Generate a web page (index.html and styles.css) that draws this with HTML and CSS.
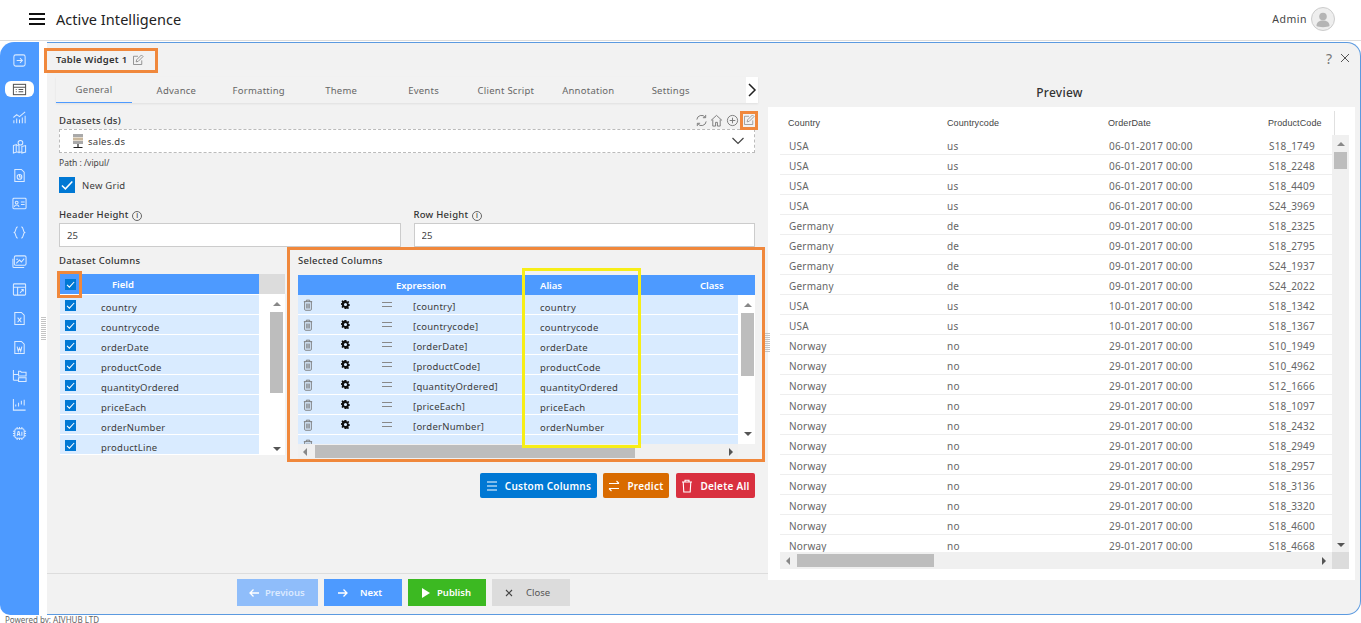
FILE: index.html
```html
<!DOCTYPE html>
<html lang="en">
<head>
    <meta charset="UTF-8">
    <meta name="viewport" content="width=device-width, initial-scale=1.0">
    <title>Active Intelligence</title>
    <link rel="stylesheet" href="styles.css">
</head>
<body>

    <svg class="icon-defs" width="0" height="0">
        <symbol id="i-edit" viewBox="0 0 16 16"><path d="M13 8.5V14H2V3h6" fill="none" stroke="currentColor"/><path d="M5.5 10.5l.7-2.8L12.6 1.3l2.1 2.1-6.4 6.4z" fill="none" stroke="currentColor"/></symbol>
        <symbol id="i-trash" viewBox="0 0 12 14"><path d="M1 3h10M4 3V1.2h4V3M2 3v9.3c0 .6.4 1 1 1h6c.6 0 1-.4 1-1V3M4.5 5.2v6M6 5.2v6M7.5 5.2v6" fill="none" stroke="currentColor" stroke-width="1.1"/></symbol>
        <symbol id="i-gear" viewBox="0 0 12 12"><path fill-rule="evenodd" d="M4.8 0h2.4l.3 1.6 1.1.5L10 1.2l1 1.6-1.1 1.2.2 1.2 1.6.6v1.9l-1.6.6-.4 1.1 1 1.4-1.3 1.3-1.5-.9-1.1.5L7.2 12H4.8l-.4-1.7-1.1-.5-1.4.9L.6 9.400l.9-1.400-.4-1.200L-.300 6.300V4.600l1.500-.6.300-1.200-1-1.300L1.900.200l1.400 1 1.100-.5zM6 3.900a2.100 2.100 0 1 0 0 4.200 2.100 2.100 0 0 0 0-4.200z" fill="currentColor"/></symbol>
        <symbol id="i-check" viewBox="0 0 12 12"><path d="M2.200 6.400l2.600 2.500 5.200-5.600" fill="none" stroke="#fff" stroke-width="1.100"/></symbol>
    </svg>

    <header class="topbar">
        <div class="brand">
            <span class="burger"><i></i><i></i><i></i></span>
            <span class="brand-name">Active Intelligence</span>
        </div>
        <div class="user">
            <span>Admin</span>
            <span class="avatar">
                <svg width="20" height="20" viewBox="0 0 20 20"><circle cx="10" cy="7.500" r="3.800" fill="#b5b5b5"/><path d="M3.500 17c0-4 3-5.500 6.500-5.500s6.500 1.500 6.500 5.500c-2 1.500-11 1.500-13 0z" fill="#b5b5b5"/></svg>
            </span>
        </div>
    </header>

    <div class="app">
        <!-- Left icon rail -->
        <nav class="rail">
            <a class="rail-item"><svg viewBox="0 0 16 16"><rect x="2" y="2" width="12" height="12" rx="2"/><path d="M5 8h6M8.500 5.500L11 8l-2.500 2.500"/></svg></a>
            <a class="rail-item active"><svg viewBox="0 0 16 16"><rect x="1.500" y="2.500" width="13" height="11"/><path d="M1.500 5.500h13M4 8h1M7 8h5M4 10.500h1M7 10.500h5"/></svg></a>
            <a class="rail-item"><svg viewBox="0 0 16 16"><path d="M2 14v-3M5 14V9M8 14v-4M11 14V8M14 14V6M1.500 8L5 5l3 2 6-5"/></svg></a>
            <a class="rail-item"><svg viewBox="0 0 16 16"><path d="M1.500 7l3-1v8l-3 1zM4.500 6l3 1.500v7l-3-1zM7.500 8.500v6l3-1M10.500 8l4-1v7l-4 1z"/><circle cx="9" cy="4" r="2.500"/></svg></a>
            <a class="rail-item"><svg viewBox="0 0 16 16"><path d="M3 1.500h7l3 3v10H3z"/><circle cx="8" cy="9.500" r="2.500"/><path d="M8 7v2.500h2.500"/></svg></a>
            <a class="rail-item"><svg viewBox="0 0 16 16"><rect x="1" y="2.500" width="14" height="11" rx="1"/><circle cx="5" cy="7" r="1.500"/><path d="M2.500 11.500c.5-2.500 4.500-2.500 5 0M9.500 6.500h4M9.500 9h4"/></svg></a>
            <a class="rail-item"><svg viewBox="0 0 16 16"><path d="M6 2C3.500 2 4.500 7 2.500 8 4.500 9 3.500 14 6 14M10 2c2.500 0 1.500 5 3.500 6-2 1-1 6-3.500 6"/></svg></a>
            <a class="rail-item"><svg viewBox="0 0 16 16"><rect x="2.500" y="2" width="12.500" height="10" rx="1.500"/><path d="M1 5v8.500c0 .5.500 1 1 1h11M4.500 10L8 6.500l2 2 3-3.500M4.500 5.500h2"/></svg></a>
            <a class="rail-item"><svg viewBox="0 0 16 16"><rect x="1.500" y="2" width="13" height="12" rx="1"/><path d="M1.500 5.500h13M6 5.500V14M8.500 11.500L12 8M10 8h2v2"/></svg></a>
            <a class="rail-item"><svg viewBox="0 0 16 16"><path d="M3 1.500h7l3 3v10H3zM6 7l4 5M10 7l-4 5"/></svg></a>
            <a class="rail-item"><svg viewBox="0 0 16 16"><path d="M3 1.500h7l3 3v10H3zM5.500 7l1.200 5L8 8.500 9.300 12l1.200-5"/></svg></a>
            <a class="rail-item"><svg viewBox="0 0 16 16"><path d="M1.500 2v11M1.500 7h5M1.500 13h5M7 3.500h2l1 1h5v4H7zM7 10.500h8v4H7z"/></svg></a>
            <a class="rail-item"><svg viewBox="0 0 16 16"><path d="M1.500 2v12h13M4 10V8M7 10V6M10 8V4M13 9V3"/></svg></a>
            <a class="rail-item"><svg viewBox="0 0 16 16"><rect x="3" y="3" width="10" height="10" rx="2"/><path d="M5.500 1v2M8 1v2M10.500 1v2M5.500 13v2M8 13v2M10.500 13v2M1 5.500h2M1 8h2M1 10.500h2M13 5.500h2M13 8h2M13 10.500h2M5.500 10.500L6.500 6h1l1 4.500M6 9h2M10.500 6v4.500"/></svg></a>
        </nav>

        <main class="panel">
            <!-- Widget settings -->
            <section class="editor">
                <div class="widget-title annotated">
                    <span>Table Widget 1</span>
                    <svg class="ico-15"><use href="#i-edit"/></svg>
                </div>

                <div class="tabbar">
                    <div class="tabs">
                        <a class="tab active">General</a>
                        <a class="tab">Advance</a>
                        <a class="tab">Formatting</a>
                        <a class="tab">Theme</a>
                        <a class="tab">Events</a>
                        <a class="tab">Client Script</a>
                        <a class="tab">Annotation</a>
                        <a class="tab">Settings</a>
                    </div>
                    <button class="tab-next"><svg width="12" height="16" viewBox="0 0 12 16"><path d="M3 2l6 6-6 6" fill="none" stroke="#222" stroke-width="1.500"/></svg></button>
                </div>

                <div class="form">
                    <div class="ds-head">
                        <label class="lbl">Datasets (ds)</label>
                        <div class="ds-tools">
                            <svg width="13" height="13" viewBox="0 0 14 14"><path d="M2 6a5 5 0 0 1 9-2.500M12 8a5 5 0 0 1-9 2.500M11.500 1v3h-3M2.500 13v-3h3" fill="none" stroke="#777" stroke-width="1"/></svg>
                            <svg width="13" height="13" viewBox="0 0 14 14"><path d="M1 7l6-5.500L13 7M3 6v7h3V9h2v4h3V6" fill="none" stroke="#777" stroke-width="1"/></svg>
                            <svg width="13" height="13" viewBox="0 0 14 14"><circle cx="7" cy="7" r="5.500" fill="none" stroke="#777"/><path d="M4 7h6M7 4v6" stroke="#777"/></svg>
                            <span class="tool-box"><svg class="ico-13"><use href="#i-edit"/></svg></span>
                        </div>
                    </div>
                    <div class="ds-select">
                        <svg width="12" height="16" viewBox="0 0 12 16"><rect x="1" y="1" width="10" height="3" fill="#a9a9a9"/><rect x="1" y="4.500" width="10" height="3" fill="#c9b79c"/><rect x="1" y="8" width="10" height="3" fill="#a9a9a9"/><path d="M6 11v3M1.500 14.500h9" stroke="#222" stroke-width="1.200"/></svg>
                        <span>sales.ds</span>
                        <svg class="chev" width="14" height="8" viewBox="0 0 14 8"><path d="M1.500 1l5.500 5.500L12.500 1" fill="none" stroke="#444" stroke-width="1.200"/></svg>
                    </div>
                    <div class="path">Path : /vipul/</div>
                    <div class="new-grid">
                        <span class="check big"><svg><use href="#i-check"/></svg></span>
                        <span>New Grid</span>
                    </div>

                    <div class="heights">
                        <div class="field">
                            <label class="lbl">Header Height <i class="info">i</i></label>
                            <input class="input-field" type="text" value="25">
                        </div>
                        <div class="field">
                            <label class="lbl">Row Height <i class="info">i</i></label>
                            <input class="input-field" type="text" value="25">
                        </div>
                    </div>

                    <div class="columns">
                        <!-- Dataset Columns -->
                        <div class="ds-cols">
                            <div class="lbl cols-title">Dataset Columns</div>
                            <div class="ds-table">
                                <div class="ds-header">
                                    <div class="ds-header-cell">
                                        <span class="head-check"><span class="check"><svg><use href="#i-check"/></svg></span></span>
                                        <span class="field-name">Field</span>
                                    </div>
                                </div>
                                <div class="ds-body">
                                    <div class="ds-rows">
                                        <div class="ds-row"><span class="check"><svg><use href="#i-check"/></svg></span><span class="ds-name">country</span></div>
                                        <div class="ds-row"><span class="check"><svg><use href="#i-check"/></svg></span><span class="ds-name">countrycode</span></div>
                                        <div class="ds-row"><span class="check"><svg><use href="#i-check"/></svg></span><span class="ds-name">orderDate</span></div>
                                        <div class="ds-row"><span class="check"><svg><use href="#i-check"/></svg></span><span class="ds-name">productCode</span></div>
                                        <div class="ds-row"><span class="check"><svg><use href="#i-check"/></svg></span><span class="ds-name">quantityOrdered</span></div>
                                        <div class="ds-row"><span class="check"><svg><use href="#i-check"/></svg></span><span class="ds-name">priceEach</span></div>
                                        <div class="ds-row"><span class="check"><svg><use href="#i-check"/></svg></span><span class="ds-name">orderNumber</span></div>
                                        <div class="ds-row"><span class="check"><svg><use href="#i-check"/></svg></span><span class="ds-name">productLine</span></div>
                                    </div>
                                    <div class="vscroll ds-scroll">
                                        <i class="arrow up"></i>
                                        <i class="thumb"></i>
                                        <i class="arrow down"></i>
                                    </div>
                                </div>
                            </div>
                        </div>

                        <!-- Selected Columns -->
                        <div class="sel-cols">
                            <div class="lbl cols-title">Selected Columns</div>
                            <div class="sel-table">
                                <div class="sel-header">
                                    <span class="h-expr">Expression</span>
                                    <span class="h-alias">Alias</span>
                                    <span class="h-class">Class</span>
                                </div>
                                <div class="sel-body">
                                    <div class="sel-rows">
                                        <div class="sel-row"><svg class="r-trash"><use href="#i-trash"/></svg><svg class="r-gear"><use href="#i-gear"/></svg><span class="r-eq"></span><span class="r-expr">[country]</span><span class="r-alias">country</span></div>
                                        <div class="sel-row"><svg class="r-trash"><use href="#i-trash"/></svg><svg class="r-gear"><use href="#i-gear"/></svg><span class="r-eq"></span><span class="r-expr">[countrycode]</span><span class="r-alias">countrycode</span></div>
                                        <div class="sel-row"><svg class="r-trash"><use href="#i-trash"/></svg><svg class="r-gear"><use href="#i-gear"/></svg><span class="r-eq"></span><span class="r-expr">[orderDate]</span><span class="r-alias">orderDate</span></div>
                                        <div class="sel-row"><svg class="r-trash"><use href="#i-trash"/></svg><svg class="r-gear"><use href="#i-gear"/></svg><span class="r-eq"></span><span class="r-expr">[productCode]</span><span class="r-alias">productCode</span></div>
                                        <div class="sel-row"><svg class="r-trash"><use href="#i-trash"/></svg><svg class="r-gear"><use href="#i-gear"/></svg><span class="r-eq"></span><span class="r-expr">[quantityOrdered]</span><span class="r-alias">quantityOrdered</span></div>
                                        <div class="sel-row"><svg class="r-trash"><use href="#i-trash"/></svg><svg class="r-gear"><use href="#i-gear"/></svg><span class="r-eq"></span><span class="r-expr">[priceEach]</span><span class="r-alias">priceEach</span></div>
                                        <div class="sel-row"><svg class="r-trash"><use href="#i-trash"/></svg><svg class="r-gear"><use href="#i-gear"/></svg><span class="r-eq"></span><span class="r-expr">[orderNumber]</span><span class="r-alias">orderNumber</span></div>
                                        <div class="sel-row"><svg class="r-trash"><use href="#i-trash"/></svg></div>
                                    </div>
                                    <div class="vscroll sel-scroll">
                                        <i class="arrow up"></i>
                                        <i class="thumb"></i>
                                        <i class="arrow down"></i>
                                    </div>
                                </div>
                                <div class="sel-hbar">
                                    <div class="hscroll">
                                        <i class="arrow left"></i>
                                        <i class="thumb"></i>
                                        <i class="arrow right"></i>
                                    </div>
                                </div>
                            </div>
                            <div class="alias-mark"></div>
                        </div>
                    </div>

                    <div class="col-actions">
                        <button class="btn btn-blue">
                            <svg width="12" height="12" viewBox="0 0 12 12"><path d="M1 2h10M1 6h10M1 10h10" stroke="#fff" stroke-width="1.200"/></svg>
                            Custom Columns
                        </button>
                        <button class="btn btn-orange">
                            <svg width="12" height="12" viewBox="0 0 12 12"><path d="M1 3.500h10M8.500 1L11 3.500M11 8.500H1M3.500 11L1 8.500" fill="none" stroke="#fff" stroke-width="1.100"/></svg>
                            Predict
                        </button>
                        <button class="btn btn-red">
                            <svg width="12" height="14" viewBox="0 0 12 14"><path d="M1 3h10M4 3V1.200h4V3M2.200 3l.6 10h6.400l.6-10" fill="none" stroke="#fff" stroke-width="1.100"/></svg>
                            Delete All
                        </button>
                    </div>
                </div>

                <footer class="wizard">
                    <button class="step step-prev">
                        <svg width="12" height="10" viewBox="0 0 12 10"><path d="M11 5H2M5.500 1.500L2 5l3.500 3.500" fill="none" stroke="#fff" stroke-width="1.300"/></svg>
                        Previous
                    </button>
                    <button class="step step-next">
                        <svg width="12" height="10" viewBox="0 0 12 10"><path d="M1 5h9M6.500 1.500L10 5 6.500 8.500" fill="none" stroke="#fff" stroke-width="1.300"/></svg>
                        <span>Next</span>
                    </button>
                    <button class="step step-publish">
                        <svg width="10" height="12" viewBox="0 0 10 12"><path d="M1 1l8 5-8 5z" fill="#fff"/></svg>
                        Publish
                    </button>
                    <button class="step step-close">
                        <svg width="10" height="10" viewBox="0 0 10 10"><path d="M2 2l6 6M8 2l-6 6" stroke="#444" stroke-width="1.100"/></svg>
                        <span>Close</span>
                    </button>
                </footer>
            </section>

            <!-- Preview -->
            <section class="preview">
                <div class="win-tools">
                    <span class="help">?</span>
                    <svg width="10" height="10" viewBox="0 0 10 10"><path d="M1 1l8 8M9 1l-8 8" stroke="#555" stroke-width="1"/></svg>
                </div>
                <h3 class="preview-title">Preview</h3>
                <div class="preview-card">
                    <div class="pv-head">
                        <div class="pv-row pv-names">
                            <span>Country</span><span>Countrycode</span><span>OrderDate</span><span>ProductCode</span>
                        </div>
                    </div>
                    <div class="pv-main">
                        <div class="pv-rows">
                            <div class="pv-row"><span>USA</span><span>us</span><span>06-01-2017 00:00</span><span>S18_1749</span></div>
                            <div class="pv-row"><span>USA</span><span>us</span><span>06-01-2017 00:00</span><span>S18_2248</span></div>
                            <div class="pv-row"><span>USA</span><span>us</span><span>06-01-2017 00:00</span><span>S18_4409</span></div>
                            <div class="pv-row"><span>USA</span><span>us</span><span>06-01-2017 00:00</span><span>S24_3969</span></div>
                            <div class="pv-row"><span>Germany</span><span>de</span><span>09-01-2017 00:00</span><span>S18_2325</span></div>
                            <div class="pv-row"><span>Germany</span><span>de</span><span>09-01-2017 00:00</span><span>S18_2795</span></div>
                            <div class="pv-row"><span>Germany</span><span>de</span><span>09-01-2017 00:00</span><span>S24_1937</span></div>
                            <div class="pv-row"><span>Germany</span><span>de</span><span>09-01-2017 00:00</span><span>S24_2022</span></div>
                            <div class="pv-row"><span>USA</span><span>us</span><span>10-01-2017 00:00</span><span>S18_1342</span></div>
                            <div class="pv-row"><span>USA</span><span>us</span><span>10-01-2017 00:00</span><span>S18_1367</span></div>
                            <div class="pv-row"><span>Norway</span><span>no</span><span>29-01-2017 00:00</span><span>S10_1949</span></div>
                            <div class="pv-row"><span>Norway</span><span>no</span><span>29-01-2017 00:00</span><span>S10_4962</span></div>
                            <div class="pv-row"><span>Norway</span><span>no</span><span>29-01-2017 00:00</span><span>S12_1666</span></div>
                            <div class="pv-row"><span>Norway</span><span>no</span><span>29-01-2017 00:00</span><span>S18_1097</span></div>
                            <div class="pv-row"><span>Norway</span><span>no</span><span>29-01-2017 00:00</span><span>S18_2432</span></div>
                            <div class="pv-row"><span>Norway</span><span>no</span><span>29-01-2017 00:00</span><span>S18_2949</span></div>
                            <div class="pv-row"><span>Norway</span><span>no</span><span>29-01-2017 00:00</span><span>S18_2957</span></div>
                            <div class="pv-row"><span>Norway</span><span>no</span><span>29-01-2017 00:00</span><span>S18_3136</span></div>
                            <div class="pv-row"><span>Norway</span><span>no</span><span>29-01-2017 00:00</span><span>S18_3320</span></div>
                            <div class="pv-row"><span>Norway</span><span>no</span><span>29-01-2017 00:00</span><span>S18_4600</span></div>
                            <div class="pv-row"><span>Norway</span><span>no</span><span>29-01-2017 00:00</span><span>S18_4668</span></div>
                        </div>
                        <div class="vscroll pv-scroll">
                            <i class="arrow up"></i>
                            <i class="thumb"></i>
                            <i class="arrow down"></i>
                        </div>
                    </div>
                    <div class="pv-foot">
                        <div class="hscroll">
                            <i class="arrow left"></i>
                            <i class="thumb"></i>
                            <i class="arrow right"></i>
                        </div>
                        <div class="corner"></div>
                    </div>
                </div>
            </section>
            <span class="grip grip-left"></span>
            <span class="grip grip-mid"></span>
        </main>
    </div>

    <div class="powered">Powered by: AIVHUB LTD</div>

</body>
</html>
```

FILE: styles.css
```css
/* Basic Styles */
* {
    box-sizing: border-box;
}

html, body {
    margin: 0;
    height: 623px;
    overflow: hidden;
}

body {
    font-family: 'Noto Sans', 'Open Sans', sans-serif;
    font-size: 9.5px;
    color: #3c3c3c;
    background-color: #fff;
    letter-spacing: .25px;
}

.icon-defs {
    position: absolute;
}

button {
    font-family: inherit;
    border: none;
    cursor: pointer;
}

/* Top bar */
.topbar {
    height: 41px;
    display: flex;
    align-items: center;
    justify-content: space-between;
    padding: 0 26px 3px 29px;
    border-bottom: 1px solid #dcdcdc;
}

.brand {
    display: flex;
    align-items: center;
    gap: 11px;
}

.burger {
    width: 16px;
    display: flex;
    flex-direction: column;
    gap: 3px;
}

.burger i {
    height: 2px;
    background-color: #111;
}

.brand-name {
    font-size: 14.5px;
    color: #222;
    letter-spacing: .05px;
}

.user {
    display: flex;
    align-items: center;
    gap: 4px;
    font-size: 10.5px;
    letter-spacing: .5px;
    color: #444;
}

.avatar {
    width: 24px;
    height: 24px;
    border-radius: 50%;
    border: 1px solid #ccc;
    background-color: #eee;
    display: flex;
    align-items: center;
    justify-content: center;
}

/* App shell */
.app {
    display: flex;
    height: 573px;
    margin-top: 1px;
}

.rail {
    width: 39px;
    flex: none;
    background-color: #4d9aff;
    border-radius: 14px 0 0 10px;
    padding-top: 4px;
    margin-right: 8px;
}

.rail-item {
    height: 28.7px;
    display: flex;
    align-items: center;
    justify-content: center;
}

.rail-item svg {
    width: 15px;
    height: 15px;
    fill: none;
    stroke: #dcebff;
    stroke-width: 1.1;
}

.rail-item.active {
    height: 16px;
    margin: 6.35px 5px 6.35px 5px;
    background-color: #fff;
    border-radius: 6px;
}

.rail-item.active svg {
    stroke: #555;
}

.panel {
    position: relative;
    flex: 1;
    display: flex;
    background-color: #f2f2f2;
    border: 1px solid #5b9ae0;
    border-left: none;
    border-radius: 0 14px 14px 0;
}

/* Editor column */
.editor {
    width: 721px;
    flex: none;
    display: flex;
    flex-direction: column;
}

.widget-title {
    width: 114px;
    height: 25px;
    margin: 5px 0 0 -3px;
    padding: 0 0 2px 9px;
    display: flex;
    align-items: center;
    gap: 5px;
    border: 3px solid #f0883c;
    font-weight: 600;
    color: #333;
}

.ico-15 {
    width: 12px;
    height: 12px;
    color: #777;
}

.ico-13 {
    width: 12px;
    height: 12px;
    color: #888;
}

.tabbar {
    display: flex;
    justify-content: space-between;
    margin: 4px 10px 0 9px;
    height: 26px;
    box-shadow: 0 1px 2px rgba(0, 0, 0, .08);
}

.tabs {
    display: flex;
    gap: 6.4px;
}

.tab {
    width: 76px;
    display: flex;
    align-items: center;
    justify-content: center;
    color: #666;
}

.tab.active {
    border-bottom: 1px solid #4d9aff;
}

.tab-next {
    width: 12px;
    padding: 0;
    background-color: #fff;
    display: flex;
    align-items: center;
    justify-content: center;
}

.form {
    padding: 0 13px 0 12px;
    height: 470px;
    flex: none;
}

.lbl {
    color: #333;
    font-weight: 500;
    display: block;
}

.ds-head {
    display: flex;
    justify-content: space-between;
    align-items: center;
    height: 18px;
    margin-top: 8px;
}

.ds-tools {
    display: flex;
    align-items: center;
    gap: 2.5px;
    margin-right: -3px;
}

.tool-box {
    width: 18px;
    height: 19px;
    margin-left: -1px;
    border: 3px solid #f0883c;
    display: flex;
    align-items: center;
    justify-content: center;
}

.ds-select {
    height: 24px;
    display: flex;
    align-items: center;
    gap: 4px;
    padding-left: 12px;
    background-color: #fff;
    border: 1px dashed #bbb;
}

.chev {
    margin-left: auto;
    margin-right: 9px;
}

.path {
    font-size: 8.5px;
    margin-top: 3px;
    letter-spacing: 0;
    line-height: 13px;
    color: #444;
}

.new-grid {
    display: flex;
    align-items: center;
    gap: 7px;
    margin-top: 8px;
    height: 16px;
}

.check {
    width: 11px;
    height: 11px;
    flex: none;
    background-color: #0078d4;
    display: block;
}

.check svg {
    display: block;
    width: 100%;
    height: 100%;
}

.check.big {
    width: 16px;
    height: 16px;
}

.heights {
    display: flex;
    gap: 13px;
    margin-top: 14px;
}

.field {
    flex: 1;
}

.field .lbl {
    line-height: 16px;
}

.info {
    display: inline-block;
    width: 10px;
    height: 10px;
    border: 1px solid #666;
    border-radius: 50%;
    font-size: 7px;
    font-style: normal;
    line-height: 8px;
    text-align: center;
    margin-left: 1px;
}

.input-field {
    width: 100%;
    height: 24px;
    display: block;
    padding: 0 7px;
    background-color: #fff;
    border: 1px solid #ccc;
    font: inherit;
    color: #444;
}

/* Column pickers */
.columns {
    display: flex;
    gap: 2px;
    margin-right: -10px;
}

.ds-cols {
    width: 226px;
    flex: none;
}

.cols-title {
    line-height: 14px;
}

.ds-cols .cols-title {
    margin-top: 7px;
    height: 20px;
}

.ds-table {
    margin-left: 1px;
}

.ds-header {
    height: 21px;
    background-color: #dcdcdc;
    border-bottom: 1px solid #fff;
}

.ds-header-cell {
    position: relative;
    width: 199px;
    height: 20px;
    background-color: #4d9aff;
    display: flex;
    align-items: center;
}

.head-check {
    position: absolute;
    left: -3px;
    top: -3px;
    width: 25px;
    height: 27px;
    border: 3px solid #f0883c;
    padding: 5px 0 0 5px;
}

.field-name {
    margin-left: 52px;
    color: #fff;
    font-weight: 600;
    letter-spacing: 0;
}

.ds-body {
    display: flex;
    height: 160px;
    background-color: #fff;
}

.ds-rows {
    width: 199px;
    flex: none;
}

.ds-row {
    height: 20px;
    display: flex;
    align-items: center;
    gap: 25px;
    padding-left: 5px;
    background-color: #d9ebff;
    border-bottom: 1px solid #fff;
}

.ds-row .check {
    margin-bottom: -2px;
}

.ds-name {
    padding-top: 5px;
}

.vscroll {
    position: relative;
    width: 15px;
    display: flex;
    flex-direction: column;
    align-items: center;
}

.vscroll .thumb {
    display: block;
    width: 13px;
    background-color: #bdbdbd;
}

.hscroll {
    display: flex;
    align-items: center;
}

.hscroll .thumb {
    display: block;
    height: 13px;
    background-color: #bdbdbd;
}

.arrow {
    display: block;
    width: 0;
    height: 0;
    flex: none;
    border: 4px solid transparent;
}

.arrow.up {
    border-top: none;
    border-bottom: 4px solid #888;
}

.arrow.down {
    border-bottom: none;
    border-top: 4px solid #555;
    margin-top: auto;
}

.arrow.left {
    border-left: none;
    border-right: 4px solid #888;
}

.arrow.right {
    border-right: none;
    border-left: 4px solid #555;
    margin-left: auto;
}

.ds-scroll {
    margin-left: 10px;
}

.ds-scroll .arrow.up {
    margin: 7px 0 6px;
}

.ds-scroll .thumb {
    height: 81px;
}

.ds-scroll .arrow.down {
    margin-bottom: 4px;
}

.sel-cols {
    position: relative;
    width: 478px;
    height: 215px;
    flex: none;
    border: 3px solid #f0883c;
    padding: 4px 8px 0;
}

.sel-cols .cols-title {
    height: 21px;
}

.sel-table {
    width: 457px;
}

.sel-header {
    height: 20px;
    background-color: #4d9aff;
    color: #fff;
    font-weight: 600;
    letter-spacing: 0;
    display: flex;
    align-items: center;
}

.h-expr {
    margin-left: 98px;
}

.h-alias {
    margin-left: 94px;
}

.h-class {
    margin-left: 138px;
}

.sel-body {
    display: flex;
    height: 149px;
    overflow: hidden;
    background-color: #fff;
}

.sel-rows {
    width: 440px;
    flex: none;
}

.sel-row {
    height: 20px;
    display: flex;
    align-items: center;
    background-color: #d9ebff;
    border-bottom: 1px solid #fff;
}

.r-trash {
    width: 10px;
    height: 12px;
    margin-left: 5px;
    color: #777;
    flex: none;
}

.r-gear {
    width: 9px;
    height: 9px;
    margin-left: 28px;
    color: #111;
    flex: none;
}

.r-eq {
    width: 10px;
    height: 5px;
    margin-left: 32px;
    border-top: 1px solid #888;
    border-bottom: 1px solid #888;
    flex: none;
}

.r-expr {
    width: 127px;
    margin-left: 21px;
    padding-top: 3px;
    flex: none;
}

.r-alias {
    padding-top: 6px;
}

.sel-scroll {
    margin-left: 2px;
}

.sel-scroll .arrow.up {
    margin: 8px 0 6px;
}

.sel-scroll .thumb {
    height: 63px;
}

.sel-scroll .arrow.down {
    margin-bottom: 8px;
}

.sel-hbar {
    height: 15px;
    background-color: #f0f0f0;
    width: 440px;
}

.sel-hbar .hscroll {
    height: 15px;
    padding: 0 5px;
}

.sel-hbar .arrow.left {
    margin-right: 8px;
}

.sel-hbar .thumb {
    width: 320px;
}

.alias-mark {
    position: absolute;
    left: 232px;
    top: 18px;
    width: 119px;
    height: 180px;
    border: 3px solid #f7ee17;
}

.col-actions {
    display: flex;
    justify-content: flex-end;
    gap: 6px;
    margin-top: 11px;
}

.btn {
    height: 25px;
    padding: 0;
    border-radius: 2px;
    color: #fff;
    font-size: 10px;
    font-weight: 600;
    letter-spacing: .25px;
    display: flex;
    align-items: center;
    justify-content: center;
    gap: 7px;
}

.btn-blue {
    width: 117px;
    background-color: #0078d4;
}

.btn-orange {
    width: 66px;
    background-color: #d96b00;
}

.btn-red {
    width: 79px;
    margin-left: 1px;
    background-color: #d9303f;
}

/* Wizard footer */
.wizard {
    margin-top: auto;
    height: 41px;
    border-top: 1px solid #ddd;
    display: flex;
    gap: 6px;
    padding: 5px 0 0 190px;
}

.step {
    width: 78px;
    height: 27px;
    padding: 0 0 0 13px;
    color: #fff;
    font-size: 9.5px;
    font-weight: 600;
    letter-spacing: 0;
    display: flex;
    align-items: center;
}

.step-prev {
    width: 81px;
    padding-left: 11px;
    gap: 5px;
    background-color: #8fbdfa;
    color: #dceaff;
}

.step-next {
    gap: 11px;
    background-color: #4d9aff;
}

.step-publish {
    gap: 6px;
    background-color: #3cb922;
}

.step-close {
    padding-left: 12px;
    gap: 12px;
    background-color: #dcdcdc;
    color: #555;
    font-weight: 400;
}

/* Preview column */
.preview {
    flex: 1;
    min-width: 0;
    display: flex;
    flex-direction: column;
    padding-right: 5px;
}

.win-tools {
    height: 16px;
    margin-top: 7px;
    display: flex;
    justify-content: flex-end;
    align-items: center;
    gap: 8px;
    padding-right: 5px;
}

.help {
    font-size: 14px;
    color: #777;
    letter-spacing: 0;
}

.preview-title {
    margin: 18px 4px 0 0;
    height: 23px;
    text-align: center;
    font-size: 12px;
    line-height: 18px;
    font-weight: 500;
    color: #333;
}

.preview-card {
    height: 473px;
    background-color: #fff;
    padding: 0 5px 0 12px;
    display: flex;
    flex-direction: column;
    flex: none;
}

.pv-head {
    width: 555px;
    height: 24px;
    margin-top: 4px;
    border-right: 1px solid #e0e0e0;
}

.pv-row {
    display: grid;
    grid-template-columns: 158px 162px 160px 1fr;
    height: 20px;
    align-items: center;
    padding: 2px 0 0 9px;
    border-bottom: 1px solid #eee;
    color: #666;
    font-size: 10px;
    letter-spacing: .2px;
    white-space: nowrap;
}

.pv-names {
    height: 24px;
    border-bottom: none;
    padding: 0 0 0 8px;
    grid-template-columns: 159px 161px 160px 1fr;
    font-family: 'Liberation Sans', sans-serif;
    font-size: 9px;
    letter-spacing: .1px;
    color: #444;
}

.pv-main {
    display: flex;
    height: 417px;
    overflow: hidden;
}

.pv-rows {
    width: 552px;
    flex: none;
}

.pv-scroll {
    width: 17px;
    background-color: #f0f0f0;
}

.pv-scroll .arrow.up {
    margin: 7px 0 6px;
}

.pv-scroll .thumb {
    height: 17px;
}

.pv-scroll .arrow.down {
    margin-bottom: 5px;
}

.pv-foot {
    display: flex;
    height: 17px;
}

.pv-foot .hscroll {
    width: 552px;
    background-color: #f0f0f0;
    padding: 0 6px;
}

.pv-foot .arrow.left {
    margin-right: 7px;
}

.pv-foot .thumb {
    width: 137px;
}

.corner {
    width: 17px;
    background-color: #dcdcdc;
}

/* Splitter grips */
.grip {
    position: absolute;
    width: 5px;
    height: 24px;
    background: repeating-linear-gradient(to bottom, #c4c4c4 0 1px, transparent 1px 2px);
}

.grip-left {
    left: -6px;
    top: 274px;
}

.grip-mid {
    left: 718px;
    top: 290px;
    height: 20px;
}

.powered {
    font-size: 8px;
    line-height: 8px;
    margin-top: 1px;
    padding-left: 5px;
    color: #666;
    letter-spacing: 0;
}
```
